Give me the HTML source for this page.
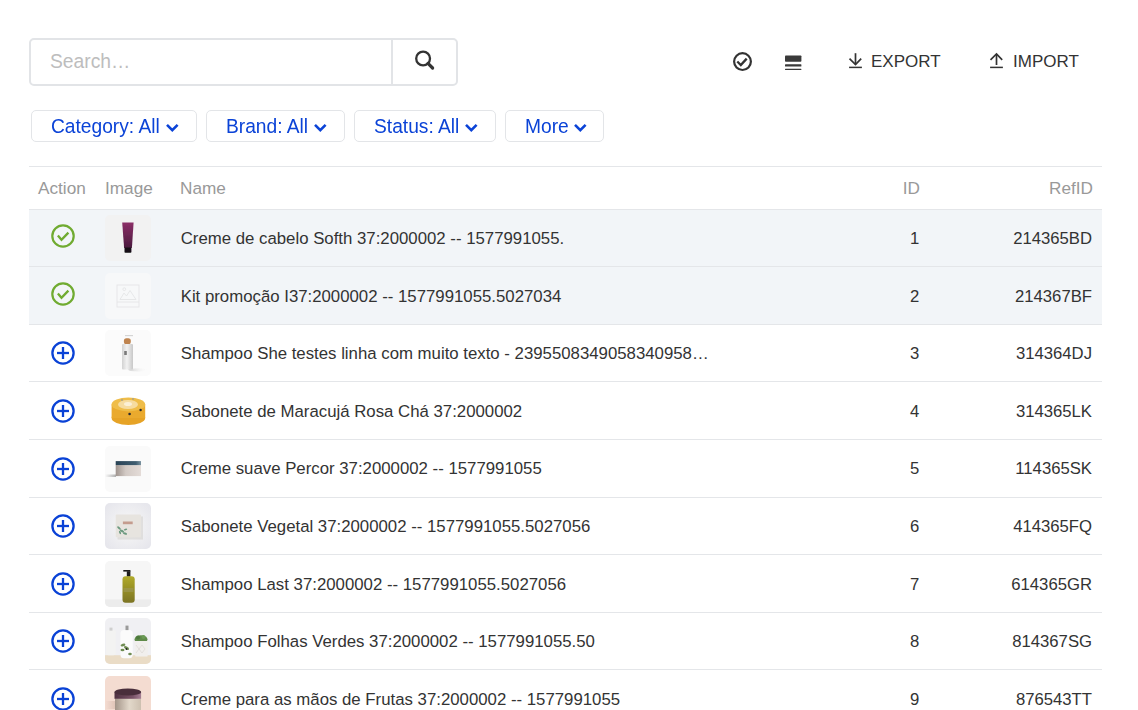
<!DOCTYPE html>
<html><head><meta charset="utf-8">
<style>
*{box-sizing:border-box}
html,body{margin:0;padding:0;background:#fff;width:1138px;height:710px;overflow:hidden;font-family:"Liberation Sans",sans-serif;color:#333}
.abs{position:absolute}
.search{left:29px;top:38px;width:429px;height:48px;border:2px solid #e2e4e7;border-radius:5px}
.search .ph{position:absolute;left:19px;top:11px;font-size:19.3px;color:#bdbdbd;white-space:pre}
.search .div{position:absolute;left:360px;top:-2px;width:2px;height:48px;background:#e2e4e7}
.fbtn{top:110px;height:32px;border:1px solid #e3e5e8;border-radius:5px;color:#0b43d7;font-size:19.2px;white-space:pre}
.fbtn span{position:absolute;top:4px;transform:scaleY(1.075);transform-origin:0 9px}
.tool{font-size:17px;color:#333;white-space:pre;top:52px}
.hline{left:29px;width:1073px;height:1px;background:#e4e6e9}
.th{top:178px;font-size:17.2px;color:#999;white-space:pre}
.row{left:29px;width:1073px}
.cell{position:absolute;font-size:16.7px;color:#333;white-space:pre}
.thumb{position:absolute;left:76px;width:46px;height:46px;border-radius:5px;overflow:hidden}
</style></head><body>

<!-- search -->
<div class="abs search">
  <div class="ph">Search…</div>
  <div class="div"></div>
  <svg class="abs" style="left:383px;top:10px" width="24" height="24" viewBox="0 0 24 24">
    <circle cx="9.1" cy="8.5" r="6.9" fill="none" stroke="#333" stroke-width="2.3"/>
    <line x1="14" y1="13.4" x2="18.6" y2="18" stroke="#333" stroke-width="3.2" stroke-linecap="round"/>
  </svg>
</div>

<!-- top right tools -->
<svg class="abs" style="left:730px;top:49px" width="25" height="25" viewBox="0 0 25 25">
  <circle cx="12.5" cy="12.6" r="8.4" fill="none" stroke="#333" stroke-width="2.2"/>
  <polyline points="7.3,12.5 10.8,16 16.7,9.6" fill="none" stroke="#333" stroke-width="2.3"/>
</svg>
<svg class="abs" style="left:780px;top:50px" width="25" height="25" viewBox="0 0 25 25">
  <rect x="5" y="5.4" width="16.4" height="6.4" rx="0.8" fill="#3a3a3a"/>
  <rect x="5" y="14.2" width="16.4" height="2.3" rx="0.6" fill="#3a3a3a"/>
  <rect x="5" y="18.7" width="16.4" height="1.3" rx="0.5" fill="#3a3a3a"/>
</svg>
<svg class="abs" style="left:845px;top:50px" width="20" height="20" viewBox="0 0 20 20">
  <line x1="10.5" y1="3.2" x2="10.5" y2="14.2" stroke="#333" stroke-width="1.7"/>
  <polyline points="4.5,8.7 10.5,14.5 16.2,8.6" fill="none" stroke="#333" stroke-width="1.7"/>
  <line x1="4.1" y1="17.4" x2="16.9" y2="17.4" stroke="#333" stroke-width="1.5"/>
</svg>
<div class="abs tool" style="left:871px">EXPORT</div>
<svg class="abs" style="left:986px;top:50px" width="20" height="20" viewBox="0 0 20 20">
  <line x1="10.5" y1="4.2" x2="10.5" y2="15" stroke="#333" stroke-width="1.7"/>
  <polyline points="4.5,9.8 10.5,4 16.2,9.8" fill="none" stroke="#333" stroke-width="1.7"/>
  <line x1="4.1" y1="17.4" x2="16.9" y2="17.4" stroke="#333" stroke-width="1.5"/>
</svg>
<div class="abs tool" style="left:1013px">IMPORT</div>

<!-- filters -->
<div class="abs fbtn" style="left:31px;width:166px"><span style="left:19px">Category: All</span>
  <svg class="abs" style="left:133px;top:12px" width="15" height="10" viewBox="0 0 15 10"><polyline points="2,1.8 7.3,7.2 12.6,1.8" fill="none" stroke="#0b43d7" stroke-width="2.6"/></svg></div>
<div class="abs fbtn" style="left:206px;width:139px"><span style="left:19px">Brand: All</span>
  <svg class="abs" style="left:106px;top:12px" width="15" height="10" viewBox="0 0 15 10"><polyline points="2,1.8 7.3,7.2 12.6,1.8" fill="none" stroke="#0b43d7" stroke-width="2.6"/></svg></div>
<div class="abs fbtn" style="left:354px;width:142px"><span style="left:19px">Status: All</span>
  <svg class="abs" style="left:109px;top:12px" width="15" height="10" viewBox="0 0 15 10"><polyline points="2,1.8 7.3,7.2 12.6,1.8" fill="none" stroke="#0b43d7" stroke-width="2.6"/></svg></div>
<div class="abs fbtn" style="left:505px;width:99px"><span style="left:19px">More</span>
  <svg class="abs" style="left:67px;top:12px" width="15" height="10" viewBox="0 0 15 10"><polyline points="2,1.8 7.3,7.2 12.6,1.8" fill="none" stroke="#0b43d7" stroke-width="2.6"/></svg></div>

<!-- table header -->
<div class="abs hline" style="top:166px"></div>
<div class="abs th" style="left:38px">Action</div>
<div class="abs th" style="left:105px">Image</div>
<div class="abs th" style="left:180px">Name</div>
<div class="abs th" style="right:218px">ID</div>
<div class="abs th" style="right:45px">RefID</div>
<div class="abs hline" style="top:209px"></div>

<!-- ROWS -->
<svg width="0" height="0" style="position:absolute"><filter id="bl" x="-20%" y="-20%" width="140%" height="140%"><feGaussianBlur stdDeviation="0.45"/></filter></svg>
<div class="abs" style="left:29px;width:1073px;top:210px;height:56px;background:#f2f5f8"></div><svg class="abs" style="left:46.9px;top:220.00px" width="32" height="32" viewBox="0 0 32 32"><circle cx="16" cy="16" r="10.7" fill="none" stroke="#70ab31" stroke-width="2.2"/><polyline points="10.9,15.5 14.5,19.8 21.4,12.6" fill="none" stroke="#70ab31" stroke-width="2.3"/></svg><div class="thumb" style="top:215.20px;left:105px"><svg width="46" height="46" viewBox="0 0 46 46"><rect width="46" height="46" fill="#f2f2f2"/><g filter="url(#bl)"><defs><linearGradient id="tg" x1="0" x2="0" y1="0" y2="1"><stop offset="0" stop-color="#8c2f68"/><stop offset="1" stop-color="#4a1a3d"/></linearGradient></defs><path d="M17.2 7.4 L28.6 7.4 L26.9 33 L19.1 33 Z" fill="url(#tg)"/><rect x="19.5" y="32.6" width="6.9" height="5.2" rx="0.8" fill="#141014"/></g></svg></div><div class="cell" style="left:180.7px;top:229.00px;font-size:16.8px">Creme de cabelo Softh 37:2000002 -- 1577991055.</div><div class="cell" style="right:218.7px;top:229.00px">1</div><div class="cell" style="right:46px;top:229.00px">214365BD</div><div class="abs hline" style="top:266px"></div><div class="abs" style="left:29px;width:1073px;top:267px;height:57px;background:#f2f5f8"></div><svg class="abs" style="left:46.9px;top:277.60px" width="32" height="32" viewBox="0 0 32 32"><circle cx="16" cy="16" r="10.7" fill="none" stroke="#70ab31" stroke-width="2.2"/><polyline points="10.9,15.5 14.5,19.8 21.4,12.6" fill="none" stroke="#70ab31" stroke-width="2.3"/></svg><div class="thumb" style="top:272.80px;left:105px"><svg width="46" height="46" viewBox="0 0 46 46"><rect width="46" height="46" fill="#f7f8f9"/><g filter="url(#bl)"><g fill="none" stroke="#e4e5e7" stroke-width="0.9"><rect x="12" y="12" width="22" height="22"/><line x1="12" y1="29" x2="34" y2="29"/><polyline points="15,26.5 19,20 21.5,23 25,17.5 31,26.5 15,26.5"/><circle cx="19.3" cy="16.2" r="1.4"/></g></g></svg></div><div class="cell" style="left:180.7px;top:286.60px;font-size:16.8px">Kit promoção I37:2000002 -- 1577991055.5027034</div><div class="cell" style="right:218.7px;top:286.60px">2</div><div class="cell" style="right:46px;top:286.60px">214367BF</div><div class="abs hline" style="top:324px"></div><div class="abs" style="left:29px;width:1073px;top:325px;height:56px;background:#fff"></div><svg class="abs" style="left:46.9px;top:337.30px" width="32" height="32" viewBox="0 0 32 32"><circle cx="16" cy="16" r="10.6" fill="none" stroke="#0a42d6" stroke-width="2.3"/><line x1="10" y1="16" x2="22" y2="16" stroke="#0a42d6" stroke-width="2.3"/><line x1="16" y1="10" x2="16" y2="22" stroke="#0a42d6" stroke-width="2.3"/></svg><div class="thumb" style="top:330.40px;left:105px"><svg width="46" height="46" viewBox="0 0 46 46"><rect width="46" height="46" fill="#fbfbfb"/><g filter="url(#bl)"><defs><linearGradient id="bs" x1="0" x2="1"><stop offset="0" stop-color="#cfcfcf"/><stop offset="1" stop-color="#fbfbfb" stop-opacity="0"/></linearGradient><linearGradient id="bb" x1="0" x2="1"><stop offset="0" stop-color="#d2d2d2"/><stop offset="0.45" stop-color="#f2f2f2"/><stop offset="1" stop-color="#c8c8c8"/></linearGradient></defs><ellipse cx="33" cy="39.8" rx="10" ry="1.6" fill="url(#bs)"/><rect x="20" y="5" width="8" height="1.2" fill="#d5d5d5"/><rect x="18.9" y="8.2" width="6.9" height="6" rx="2.5" fill="#bf8450"/><rect x="17" y="14.1" width="11" height="25.5" rx="1" fill="url(#bb)"/><rect x="19.2" y="21" width="2.6" height="4" fill="#7a7a7a"/></g></svg></div><div class="cell" style="left:180.7px;top:344.20px;font-size:16.8px">Shampoo She testes linha com muito texto - 2395508349058340958…</div><div class="cell" style="right:218.7px;top:344.20px">3</div><div class="cell" style="right:46px;top:344.20px">314364DJ</div><div class="abs hline" style="top:381px"></div><div class="abs" style="left:29px;width:1073px;top:382px;height:57px;background:#fff"></div><svg class="abs" style="left:46.9px;top:394.90px" width="32" height="32" viewBox="0 0 32 32"><circle cx="16" cy="16" r="10.6" fill="none" stroke="#0a42d6" stroke-width="2.3"/><line x1="10" y1="16" x2="22" y2="16" stroke="#0a42d6" stroke-width="2.3"/><line x1="16" y1="10" x2="16" y2="22" stroke="#0a42d6" stroke-width="2.3"/></svg><div class="thumb" style="top:388.00px;left:105px"><svg width="46" height="46" viewBox="0 0 46 46"><rect width="46" height="46" fill="#ffffff"/><g filter="url(#bl)"><ellipse cx="23.4" cy="30" rx="16.8" ry="7" fill="#e6a328"/><rect x="6.6" y="16.4" width="33.6" height="13.6" fill="#eaaa2e"/><ellipse cx="23.4" cy="16.4" rx="16.8" ry="7" fill="#efbd48"/><ellipse cx="23" cy="16.5" rx="10" ry="4.5" fill="#f6dca0"/><ellipse cx="23" cy="16" rx="4" ry="2" fill="#fbf0d6"/><circle cx="24.6" cy="26" r="1.3" fill="#2a2a30"/><circle cx="35.6" cy="22" r="1.2" fill="#2a2a30"/><circle cx="17" cy="12" r="0.8" fill="#7a8fb8"/><circle cx="28" cy="11" r="0.8" fill="#7a8fb8"/></g></svg></div><div class="cell" style="left:180.7px;top:401.80px;font-size:16.8px">Sabonete de Maracujá Rosa Chá 37:2000002</div><div class="cell" style="right:218.7px;top:401.80px">4</div><div class="cell" style="right:46px;top:401.80px">314365LK</div><div class="abs hline" style="top:439px"></div><div class="abs" style="left:29px;width:1073px;top:440px;height:57px;background:#fff"></div><svg class="abs" style="left:46.9px;top:452.50px" width="32" height="32" viewBox="0 0 32 32"><circle cx="16" cy="16" r="10.6" fill="none" stroke="#0a42d6" stroke-width="2.3"/><line x1="10" y1="16" x2="22" y2="16" stroke="#0a42d6" stroke-width="2.3"/><line x1="16" y1="10" x2="16" y2="22" stroke="#0a42d6" stroke-width="2.3"/></svg><div class="thumb" style="top:445.60px;left:105px"><svg width="46" height="46" viewBox="0 0 46 46"><rect width="46" height="46" fill="#fafafa"/><g filter="url(#bl)"><defs><linearGradient id="js" x1="0" x2="1"><stop offset="0" stop-color="#fafafa"/><stop offset="1" stop-color="#b0b0b0"/></linearGradient><linearGradient id="jb" x1="0" x2="1"><stop offset="0" stop-color="#9f948e"/><stop offset="0.4" stop-color="#d3cac5"/><stop offset="1" stop-color="#e4dcd8"/></linearGradient><linearGradient id="jl" x1="0" x2="1"><stop offset="0" stop-color="#2a4356"/><stop offset="0.8" stop-color="#3f5d70"/><stop offset="1" stop-color="#7a93a0"/></linearGradient></defs><rect x="0" y="28.5" width="11" height="2.5" fill="url(#js)"/><rect x="10.7" y="19.1" width="25.3" height="11" fill="url(#jb)"/><rect x="10.7" y="15.1" width="25.3" height="4" fill="url(#jl)"/></g></svg></div><div class="cell" style="left:180.7px;top:459.40px;font-size:16.8px">Creme suave Percor 37:2000002 -- 1577991055</div><div class="cell" style="right:218.7px;top:459.40px">5</div><div class="cell" style="right:46px;top:459.40px">114365SK</div><div class="abs hline" style="top:497px"></div><div class="abs" style="left:29px;width:1073px;top:498px;height:56px;background:#fff"></div><svg class="abs" style="left:46.9px;top:510.10px" width="32" height="32" viewBox="0 0 32 32"><circle cx="16" cy="16" r="10.6" fill="none" stroke="#0a42d6" stroke-width="2.3"/><line x1="10" y1="16" x2="22" y2="16" stroke="#0a42d6" stroke-width="2.3"/><line x1="16" y1="10" x2="16" y2="22" stroke="#0a42d6" stroke-width="2.3"/></svg><div class="thumb" style="top:503.20px;left:105px"><svg width="46" height="46" viewBox="0 0 46 46"><rect width="46" height="46" fill="url(#barbg)"/><g filter="url(#bl)"><defs><radialGradient id="barbg" cx="0.5" cy="0.5" r="0.65"><stop offset="0.3" stop-color="#f3f3f4"/><stop offset="1" stop-color="#e6e6ec"/></radialGradient></defs><rect x="12.5" y="13.5" width="25.5" height="23" fill="#d6d4d0" opacity="0.6"/><rect x="10.7" y="11.4" width="25.3" height="22.8" rx="1" fill="#e7e4df"/><rect x="17.9" y="18.5" width="9.8" height="2.7" fill="#c49c8e"/><g fill="#6d9a80"><ellipse cx="14" cy="25" rx="2.2" ry="1" transform="rotate(40 14 25)"/><ellipse cx="17" cy="28" rx="2.4" ry="1.1" transform="rotate(30 17 28)"/><ellipse cx="20" cy="30.5" rx="2.2" ry="1" transform="rotate(20 20 30.5)"/><ellipse cx="15" cy="29.5" rx="1.8" ry="0.9" transform="rotate(70 15 29.5)"/><ellipse cx="20.5" cy="26.5" rx="1.8" ry="0.9" transform="rotate(-20 20.5 26.5)"/></g></g></svg></div><div class="cell" style="left:180.7px;top:517.00px;font-size:16.8px">Sabonete Vegetal 37:2000002 -- 1577991055.5027056</div><div class="cell" style="right:218.7px;top:517.00px">6</div><div class="cell" style="right:46px;top:517.00px">414365FQ</div><div class="abs hline" style="top:554px"></div><div class="abs" style="left:29px;width:1073px;top:555px;height:57px;background:#fff"></div><svg class="abs" style="left:46.9px;top:567.70px" width="32" height="32" viewBox="0 0 32 32"><circle cx="16" cy="16" r="10.6" fill="none" stroke="#0a42d6" stroke-width="2.3"/><line x1="10" y1="16" x2="22" y2="16" stroke="#0a42d6" stroke-width="2.3"/><line x1="16" y1="10" x2="16" y2="22" stroke="#0a42d6" stroke-width="2.3"/></svg><div class="thumb" style="top:560.80px;left:105px"><svg width="46" height="46" viewBox="0 0 46 46"><rect width="46" height="46" fill="#f6f6f6"/><g filter="url(#bl)"><rect y="38.5" width="46" height="7.5" fill="#ececec"/><rect x="18.3" y="9" width="7.1" height="1.6" fill="#1e1e1e"/><rect x="21.8" y="10.2" width="3.6" height="5.5" fill="#1e1e1e"/><defs><linearGradient id="pg" x1="0" x2="0" y1="0" y2="1"><stop offset="0" stop-color="#b0aa2a"/><stop offset="1" stop-color="#7c7424"/></linearGradient></defs><rect x="17.5" y="15.3" width="12.2" height="26.4" rx="3" fill="url(#pg)"/><rect x="18.5" y="27" width="10" height="4" fill="#9f9a58" opacity="0.6"/></g></svg></div><div class="cell" style="left:180.7px;top:574.60px;font-size:16.8px">Shampoo Last 37:2000002 -- 1577991055.5027056</div><div class="cell" style="right:218.7px;top:574.60px">7</div><div class="cell" style="right:46px;top:574.60px">614365GR</div><div class="abs hline" style="top:612px"></div><div class="abs" style="left:29px;width:1073px;top:613px;height:56px;background:#fff"></div><svg class="abs" style="left:46.9px;top:625.30px" width="32" height="32" viewBox="0 0 32 32"><circle cx="16" cy="16" r="10.6" fill="none" stroke="#0a42d6" stroke-width="2.3"/><line x1="10" y1="16" x2="22" y2="16" stroke="#0a42d6" stroke-width="2.3"/><line x1="16" y1="10" x2="16" y2="22" stroke="#0a42d6" stroke-width="2.3"/></svg><div class="thumb" style="top:618.40px;left:105px"><svg width="46" height="46" viewBox="0 0 46 46"><defs><linearGradient id="scbg" x1="0" x2="0" y1="0" y2="1"><stop offset="0" stop-color="#f0f0f3"/><g filter="url(#bl)"><stop offset="1" stop-color="#e4e4ea"/></linearGradient></defs><rect width="46" height="46" fill="url(#scbg)"/><rect y="37.2" width="46" height="8.8" fill="#eadcc6"/><rect x="1" y="12" width="9.8" height="25.2" rx="2.5" fill="#f3f3f2"/><rect x="4.5" y="9.6" width="3" height="3" fill="#cfcfcf"/><rect x="15.5" y="12" width="12.2" height="28.3" rx="3.5" fill="#fbfbfb"/><rect x="20.5" y="7.6" width="3" height="4.5" fill="#9a9a9a"/><g fill="#6f8c52"><ellipse cx="18" cy="27" rx="2.5" ry="1.3" transform="rotate(-20 18 27)"/><ellipse cx="21.5" cy="30" rx="2.8" ry="1.5" transform="rotate(30 21.5 30)"/><ellipse cx="17.5" cy="32" rx="2" ry="1.2"/><ellipse cx="25" cy="36" rx="1.8" ry="1.2"/></g><circle cx="21.5" cy="31" r="0.9" fill="#222"/><ellipse cx="36" cy="21.5" rx="6.5" ry="4.2" fill="#5f8a4a"/><circle cx="33" cy="19.5" r="2" fill="#4d7a3c"/><circle cx="38.5" cy="19" r="2" fill="#6a9a55"/><path d="M29.3 23 L43.5 23 L42.5 38.4 L30.3 38.4 Z" fill="#f1efed"/><path d="M31 27 l3 4 l3 -4 l3 4 M31 35 l3 -4 l3 4 l3 -4" stroke="#dcd8d4" stroke-width="0.7" fill="none"/></g></svg></div><div class="cell" style="left:180.7px;top:632.20px;font-size:16.8px">Shampoo Folhas Verdes 37:2000002 -- 1577991055.50</div><div class="cell" style="right:218.7px;top:632.20px">8</div><div class="cell" style="right:46px;top:632.20px">814367SG</div><div class="abs hline" style="top:669px"></div><div class="abs" style="left:29px;width:1073px;top:670px;height:57px;background:#fff"></div><svg class="abs" style="left:46.9px;top:682.90px" width="32" height="32" viewBox="0 0 32 32"><circle cx="16" cy="16" r="10.6" fill="none" stroke="#0a42d6" stroke-width="2.3"/><line x1="10" y1="16" x2="22" y2="16" stroke="#0a42d6" stroke-width="2.3"/><line x1="16" y1="10" x2="16" y2="22" stroke="#0a42d6" stroke-width="2.3"/></svg><div class="thumb" style="top:676.00px;left:105px"><svg width="46" height="46" viewBox="0 0 46 46"><rect width="46" height="46" fill="#f4dcd1"/><g filter="url(#bl)"><defs><linearGradient id="pj" x1="0" x2="1"><stop offset="0" stop-color="#a39488"/><stop offset="0.55" stop-color="#e2d8ca"/><stop offset="1" stop-color="#cdc0b0"/></linearGradient><linearGradient id="pl" x1="0" x2="1"><stop offset="0" stop-color="#4e3040"/><stop offset="0.7" stop-color="#7a5468"/><stop offset="1" stop-color="#a57f93"/></linearGradient><linearGradient id="psh" x1="0" x2="1"><stop offset="0" stop-color="#f4dcd1"/><stop offset="1" stop-color="#d9bcb0"/></linearGradient></defs><rect x="0" y="25" width="11" height="8" fill="url(#psh)" opacity="0.8"/><rect x="10" y="22.8" width="26" height="23.2" fill="url(#pj)"/><rect x="9.5" y="16" width="26.6" height="6.8" fill="url(#pl)"/><ellipse cx="22.8" cy="16" rx="13.3" ry="3.6" fill="#4a2f3b"/></g></svg></div><div class="cell" style="left:180.7px;top:689.80px;font-size:16.8px">Creme para as mãos de Frutas 37:2000002 -- 1577991055</div><div class="cell" style="right:218.7px;top:689.80px">9</div><div class="cell" style="right:46px;top:689.80px">876543TT</div><div class="abs hline" style="top:727px"></div>
</body></html>
